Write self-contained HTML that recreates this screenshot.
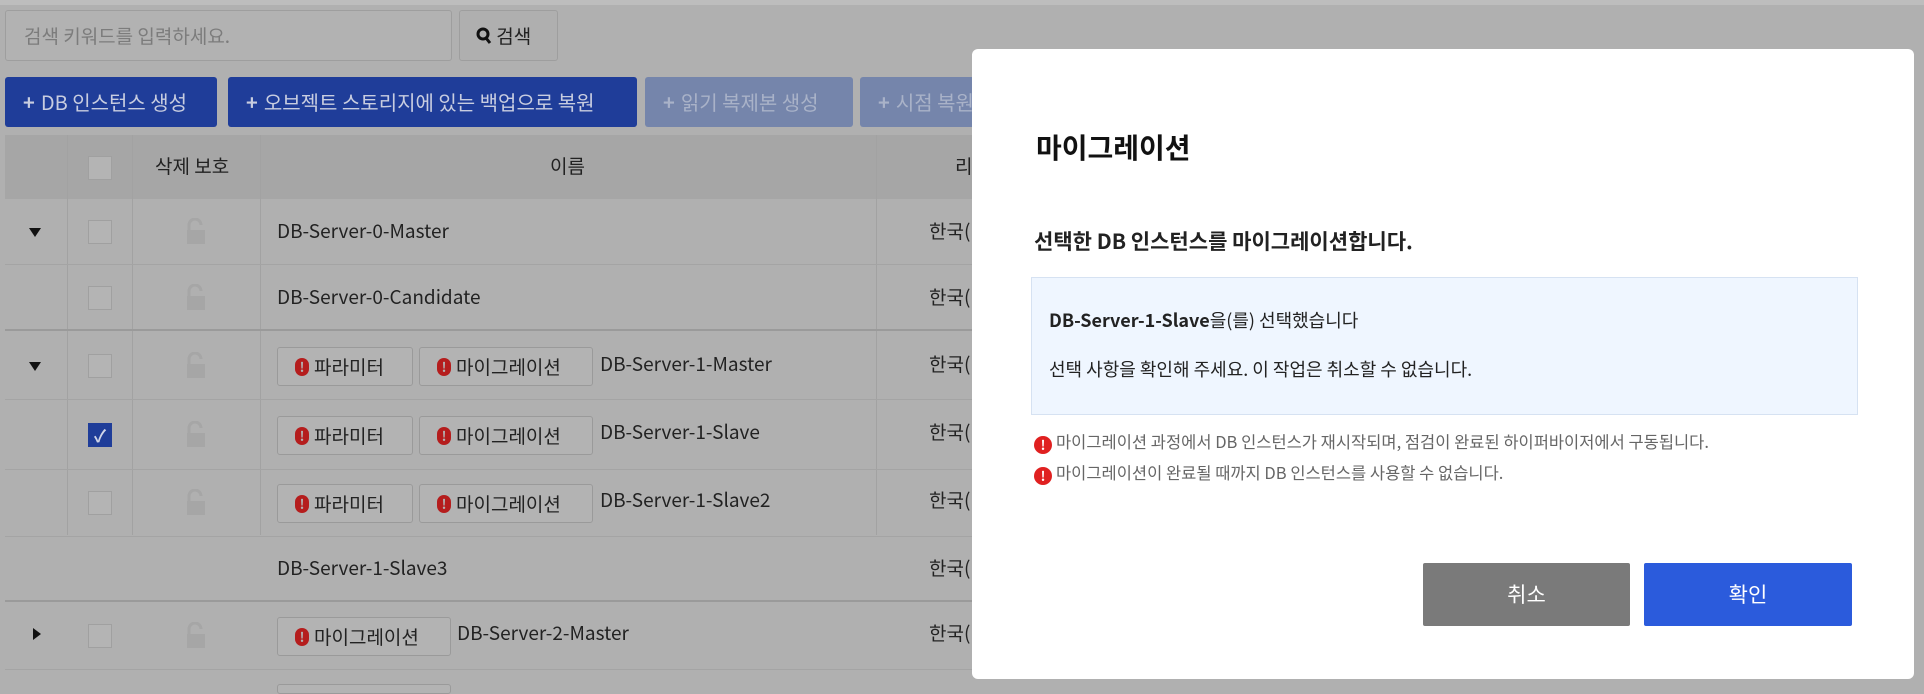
<!DOCTYPE html>
<html><head><meta charset="utf-8"><style>
*{box-sizing:border-box;margin:0;padding:0}
body{width:1924px;height:690px;overflow:hidden;background:#b0b0b0;font-family:"Noto Sans CJK KR","Liberation Sans",sans-serif;position:relative;color:#222;line-height:1.2}
.a{position:absolute}
.btn{position:absolute;top:77px;height:50px;border-radius:3px;color:#c8cde0;font-size:20px;line-height:50px;padding-left:18px;background:#1f3d99}
.btn b{margin-right:6px}
.dis{background:#7585ab;color:#a9b2c8}
.row{position:absolute;left:5px;width:970px;border-bottom:1px solid #a4a4a4}
.cb{position:absolute;left:88px;width:24px;height:24px;border:1px solid #a0a0a0;background:#b4b4b4}
.lock{position:absolute;left:186px;width:20px;height:26px}
.nm{position:absolute;font-size:19px;color:#222}
.pill{position:absolute;height:39px;border:1px solid #9a9a9a;border-radius:3px;background:#b3b3b3;font-size:19px;line-height:37px;padding-left:36px;color:#222}
.pill:before{content:"!";position:absolute;left:17px;top:10px;width:14px;height:18px;border-radius:8px;background:#b51d1d;color:#b3b3b3;font-size:13px;font-weight:bold;line-height:18px;text-align:center}
.kr{position:absolute;left:929px;font-size:19px}
.tri{position:absolute;left:29px;width:0;height:0}
.ic{display:inline-block;width:18px;height:18px;border-radius:9px;background:#e02020;color:#fff;font-size:13px;font-weight:bold;text-align:center;line-height:18px;vertical-align:-2px;margin-right:4px}
</style></head><body>
<div class="a" style="left:0;top:0;width:1924px;height:5px;background:#bdbdbd"></div>
<div class="a" style="left:5px;top:10px;width:447px;height:51px;border:1px solid #9e9e9e;border-radius:3px;background:#b2b2b2;font-size:19px;color:#7c7c7c;line-height:49px;padding-left:18px">검색 키워드를 입력하세요.</div>
<div class="a" style="left:459px;top:10px;width:99px;height:51px;border:1px solid #9e9e9e;border-radius:3px;background:#afafaf;font-size:19px;color:#222;line-height:49px;padding-left:16px"><svg width="16" height="18" viewBox="0 0 16 18" style="vertical-align:-2px"><circle cx="7" cy="7" r="5" fill="none" stroke="#111" stroke-width="3"/><path d="M10 11l4 5" stroke="#111" stroke-width="3"/></svg> 검색</div>
<div class="btn" style="left:5px;width:212px"><b>+</b>DB 인스턴스 생성</div>
<div class="btn" style="left:228px;width:409px"><b>+</b>오브젝트 스토리지에 있는 백업으로 복원</div>
<div class="btn dis" style="left:645px;width:208px"><b>+</b>읽기 복제본 생성</div>
<div class="btn dis" style="left:860px;width:120px"><b>+</b>시점 복원</div>
<div class="a" style="left:5px;top:135px;width:970px;height:64px;background:#a6a6a6"></div>
<div class="a" style="left:67px;top:135px;width:1px;height:400px;background:#a2a2a2"></div>
<div class="a" style="left:132px;top:135px;width:1px;height:400px;background:#a2a2a2"></div>
<div class="a" style="left:260px;top:135px;width:1px;height:400px;background:#a2a2a2"></div>
<div class="a" style="left:876px;top:135px;width:1px;height:400px;background:#a2a2a2"></div>
<div class="cb" style="top:156px"></div>
<div class="a" style="left:155px;top:155px;font-size:19px">삭제 보호</div>
<div class="a" style="left:550px;top:155px;font-size:19px">이름</div>
<div class="a" style="left:955px;top:155px;font-size:19px">리</div>

<div class="row" style="top:199px;height:66px"></div>
<div class="tri" style="top:228px;border-left:6px solid transparent;border-right:6px solid transparent;border-top:9px solid #111"></div>
<div class="cb" style="top:220px"></div><svg class="lock" style="top:218px" viewBox="0 0 20 26"><path d="M3 12V7a6 6 0 0 1 12 0" fill="none" stroke="#a6a6a6" stroke-width="3"/><rect x="1" y="12" width="18" height="14" fill="#a6a6a6"/></svg>
<div class="nm" style="left:277px;top:220px">DB-Server-0-Master</div><div class="kr" style="top:220px">한국(</div>

<div class="row" style="top:265px;height:66px;border-bottom:2px solid #9a9a9a"></div>
<div class="cb" style="top:286px"></div><svg class="lock" style="top:284px" viewBox="0 0 20 26"><path d="M3 12V7a6 6 0 0 1 12 0" fill="none" stroke="#a6a6a6" stroke-width="3"/><rect x="1" y="12" width="18" height="14" fill="#a6a6a6"/></svg>
<div class="nm" style="left:277px;top:286px">DB-Server-0-Candidate</div><div class="kr" style="top:286px">한국(</div>

<div class="row" style="top:331px;height:69px"></div>
<div class="tri" style="top:362px;border-left:6px solid transparent;border-right:6px solid transparent;border-top:9px solid #111"></div>
<div class="cb" style="top:354px"></div><svg class="lock" style="top:352px" viewBox="0 0 20 26"><path d="M3 12V7a6 6 0 0 1 12 0" fill="none" stroke="#a6a6a6" stroke-width="3"/><rect x="1" y="12" width="18" height="14" fill="#a6a6a6"/></svg>
<div class="pill" style="left:277px;top:347px;width:136px">파라미터</div><div class="pill" style="left:419px;top:347px;width:174px">마이그레이션</div>
<div class="nm" style="left:600px;top:353px">DB-Server-1-Master</div><div class="kr" style="top:353px">한국(</div>

<div class="row" style="top:400px;height:70px"></div>
<div class="cb" style="top:423px;background:#1f3d99;border-color:#1f3d99;color:#d0d5e8;font-size:17px;font-weight:bold;text-align:center;line-height:22px">✓</div><svg class="lock" style="top:421px" viewBox="0 0 20 26"><path d="M3 12V7a6 6 0 0 1 12 0" fill="none" stroke="#a6a6a6" stroke-width="3"/><rect x="1" y="12" width="18" height="14" fill="#a6a6a6"/></svg>
<div class="pill" style="left:277px;top:416px;width:136px">파라미터</div><div class="pill" style="left:419px;top:416px;width:174px">마이그레이션</div>
<div class="nm" style="left:600px;top:421px">DB-Server-1-Slave</div><div class="kr" style="top:421px">한국(</div>

<div class="row" style="top:470px;height:67px"></div>
<div class="cb" style="top:491px"></div><svg class="lock" style="top:489px" viewBox="0 0 20 26"><path d="M3 12V7a6 6 0 0 1 12 0" fill="none" stroke="#a6a6a6" stroke-width="3"/><rect x="1" y="12" width="18" height="14" fill="#a6a6a6"/></svg>
<div class="pill" style="left:277px;top:484px;width:136px">파라미터</div><div class="pill" style="left:419px;top:484px;width:174px">마이그레이션</div>
<div class="nm" style="left:600px;top:489px">DB-Server-1-Slave2</div><div class="kr" style="top:489px">한국(</div>

<div class="row" style="top:537px;height:65px;border-bottom:2px solid #9a9a9a"></div>
<div class="nm" style="left:277px;top:557px">DB-Server-1-Slave3</div><div class="kr" style="top:557px">한국(</div>

<div class="row" style="top:602px;height:68px"></div>
<div class="tri" style="top:628px;left:33px;border-top:6px solid transparent;border-bottom:6px solid transparent;border-left:8px solid #111"></div>
<div class="cb" style="top:624px"></div><svg class="lock" style="top:622px" viewBox="0 0 20 26"><path d="M3 12V7a6 6 0 0 1 12 0" fill="none" stroke="#a6a6a6" stroke-width="3"/><rect x="1" y="12" width="18" height="14" fill="#a6a6a6"/></svg>
<div class="pill" style="left:277px;top:617px;width:174px">마이그레이션</div>
<div class="nm" style="left:457px;top:622px">DB-Server-2-Master</div><div class="kr" style="top:622px">한국(</div>
<div class="a" style="left:277px;top:684px;width:174px;height:10px;border:1px solid #9a9a9a;border-radius:3px;background:#b3b3b3"></div>

<div class="a" style="left:972px;top:49px;width:942px;height:630px;background:#fff;border-radius:6px">
 <div class="a" style="left:64px;top:82px;font-size:28px;font-weight:bold;color:#111">마이그레이션</div>
 <div class="a" style="left:62px;top:180px;font-size:21px;font-weight:bold;color:#222">선택한 DB 인스턴스를 마이그레이션합니다.</div>
 <div class="a" style="left:59px;top:228px;width:827px;height:138px;background:#eff6ff;border:1px solid #d6e2f2">
  <div class="a" style="left:17px;top:32px;font-size:18px;color:#222"><b>DB-Server-1-Slave</b>을(를) 선택했습니다</div>
  <div class="a" style="left:17px;top:81px;font-size:18px;color:#222">선택 사항을 확인해 주세요. 이 작업은 취소할 수 없습니다.</div>
 </div>
 <div class="a" style="left:62px;top:383px;font-size:16.5px;color:#666"><span class="ic">!</span>마이그레이션 과정에서 DB 인스턴스가 재시작되며, 점검이 완료된 하이퍼바이저에서 구동됩니다.</div>
 <div class="a" style="left:62px;top:414px;font-size:16.5px;color:#666"><span class="ic">!</span>마이그레이션이 완료될 때까지 DB 인스턴스를 사용할 수 없습니다.</div>
 <div class="a" style="left:451px;top:514px;width:207px;height:63px;background:#7a7a7a;color:#fff;font-size:21px;text-align:center;line-height:63px;border-radius:2px">취소</div>
 <div class="a" style="left:672px;top:514px;width:208px;height:63px;background:#2b5bdc;color:#fff;font-size:21px;text-align:center;line-height:63px;border-radius:2px">확인</div>
</div>
</body></html>
